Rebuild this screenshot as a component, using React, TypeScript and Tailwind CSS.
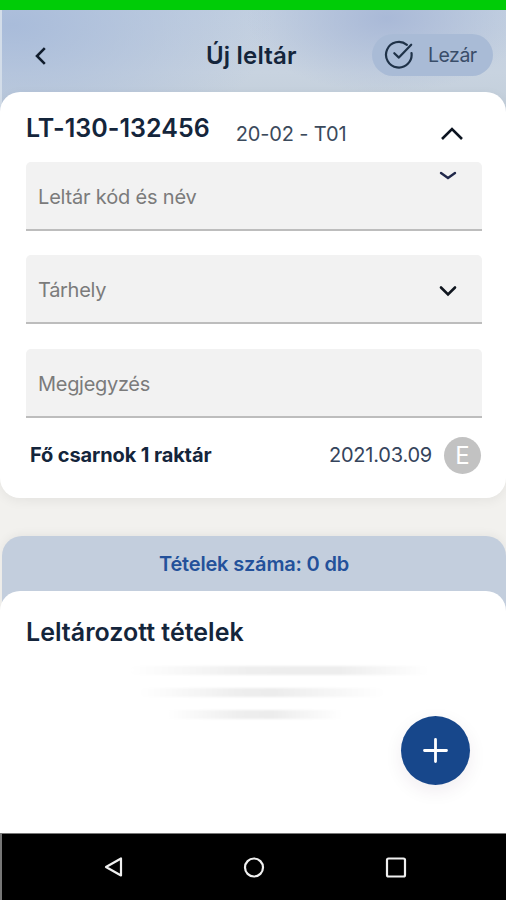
import type { ReactNode } from 'react'

type FieldProps = {
  label: string
  className?: string
  labelClass?: string
  children?: ReactNode
}

function Field({ label, className = '', labelClass = '', children }: FieldProps) {
  return (
    <div className={`flex h-[69px] justify-between rounded-t-[5px] border-b-2 border-[#bdbdbd] bg-[#f2f2f2] pl-[12px] pr-[24px] ${className}`}>
      <span className={`self-center whitespace-nowrap pt-[2px] text-[20px] leading-6 text-[#7b7b7b] ${labelClass}`}>{label}</span>
      {children}
    </div>
  )
}

function Header() {
  return (
    <header className="flex h-[104px] items-start border-l-2 border-[#d3dde9] bg-[radial-gradient(ellipse_140px_75px_at_385px_8px,#a9b9d7_0%,rgba(174,190,218,0)_100%),radial-gradient(ellipse_260px_130px_at_10px_15px,#a9bcda_0%,rgba(174,192,218,0)_100%),linear-gradient(180deg,#c3d0e1_0%,#c8d3e0_60%,#c2ced9_100%)] pl-[32px] pr-[13px] pt-[24px]">
      <button aria-label="Vissza" className="flex h-[42px] w-[14px] items-center pt-[2px]">
        <svg width="14" height="20" viewBox="0 0 14 20" fill="none" stroke="#101c2c" strokeWidth="2.6">
          <path d="M10.8 2.2 3 10l7.8 7.8" />
        </svg>
      </button>
      <h1 className="ml-[158px] mt-[5px] whitespace-nowrap text-[24px] font-semibold leading-[34px] tracking-[0.2px] text-[#14253b]">Új leltár</h1>
      <button className="ml-auto flex h-[42px] w-[121px] items-center rounded-full bg-[#a9bbd6] pl-[12px]">
        <svg width="30" height="30" viewBox="0 0 30 30" fill="none" stroke="#1f3248" strokeWidth="2.2" strokeLinecap="round" strokeLinejoin="round">
          <path d="M22.9 4.8A12.8 12.8 0 1 0 27.5 13" />
          <path d="m10.3 13.2 4.6 4.4L27.2 4.7" />
        </svg>
        <span className="ml-[14px] text-[19.5px] leading-6 tracking-[-0.5px] text-[#394d69]">Lezár</span>
      </button>
    </header>
  )
}

function DetailsCard() {
  return (
    <section className="-mt-[22px] flex h-[406px] flex-col rounded-[20px] bg-white pl-[26px] pr-[24px] shadow-[0_3px_12px_rgba(0,0,0,0.06)]">
      <div className="flex h-[70px] items-start">
        <h2 className="mt-[21px] whitespace-nowrap text-[25px] font-semibold leading-[30px] tracking-[0.05px] text-[#14253b]">LT-130-132456</h2>
        <span className="ml-[26px] mt-[30px] whitespace-nowrap text-[20px] leading-6 tracking-[-0.15px] text-[#3b4a5c]">20-02 - T01</span>
        <svg className="ml-auto mr-[18px] mt-[34px]" width="24" height="15" viewBox="0 0 24 15" fill="none" stroke="#0c1420" strokeWidth="2.6">
          <path d="M2 13 12 3l10 10" />
        </svg>
      </div>
      <Field label="Leltár kód és név" labelClass="tracking-[-0.18px]">
        <svg className="mt-[8px]" width="20" height="11" viewBox="0 0 20 11" fill="none" stroke="#20284a" strokeWidth="2.4" strokeLinecap="round">
          <path d="m3 3 7 5 7-5" />
        </svg>
      </Field>
      <Field label="Tárhely" className="mt-[24px]" labelClass="tracking-[-0.3px]">
        <svg className="mt-[29px]" width="20" height="14" viewBox="0 0 20 14" fill="none" stroke="#10161f" strokeWidth="2.6" strokeLinecap="round">
          <path d="m3 3.5 7 7 7-7" />
        </svg>
      </Field>
      <Field label="Megjegyzés" className="mt-[25px]" labelClass="tracking-[-0.3px]" />
      <div className="mt-[18px] flex h-[38px] items-center pl-[4px] pr-px">
        <strong className="whitespace-nowrap text-[20px] font-bold leading-6 tracking-[-0.12px] text-[#14253b]">Fő csarnok 1 raktár</strong>
        <span className="ml-auto whitespace-nowrap text-[20px] leading-6 tracking-[-0.22px] text-[#35445c]">2021.03.09</span>
        <span className="ml-[12px] flex size-[37px] items-center justify-center rounded-full bg-[#c2c2c2] pt-px text-[24px] text-white">E</span>
      </div>
    </section>
  )
}

function Items() {
  return (
    <section className="ml-[2px] mt-[38px] flex flex-1 flex-col rounded-t-[20px] bg-[#c3cedd] shadow-[0_-2px_10px_rgba(0,0,0,0.05)]">
      <p className="h-[55px] pt-[16px] text-center text-[20px] font-semibold leading-6 tracking-[-0.18px] text-[#23519a]">Tételek száma: 0 db</p>
      <div className="-ml-[2px] flex flex-1 flex-col rounded-t-[20px] bg-white">
        <h2 className="ml-[26px] mt-[24px] text-[25px] font-semibold leading-[34px] text-[#14253b]">Leltározott tételek</h2>
        <div className="mt-[17px] flex flex-col gap-[13px] pl-[130px]">
          <div className="h-[9px] w-[298px] bg-[linear-gradient(90deg,#ffffff_0%,#eeeeee_40%,#ededed_70%,#ffffff_100%)] blur-[1px]" />
          <div className="ml-[10px] h-[9px] w-[244px] bg-[linear-gradient(90deg,#ffffff_0%,#eeeeee_40%,#ececec_55%,#ffffff_100%)] blur-[1px]" />
          <div className="ml-[38px] h-[9px] w-[174px] bg-[linear-gradient(90deg,#ffffff_0%,#eeeeee_40%,#ececec_60%,#ffffff_100%)] blur-[1px]" />
        </div>
      </div>
    </section>
  )
}

function SystemBar() {
  return (
    <nav className="flex h-[67px] items-center border-l-2 border-t border-[#777777] bg-black pl-[101px] text-[#f0f0f0]">
      <svg width="22" height="24" viewBox="0 0 22 24" fill="none" stroke="currentColor" strokeWidth="2.2" strokeLinejoin="round">
        <path d="M18 3.5v17L3 12z" />
      </svg>
      <svg className="ml-[117px]" width="24" height="24" viewBox="0 0 24 24" fill="none" stroke="currentColor" strokeWidth="2.2">
        <circle cx="12" cy="12.5" r="9" />
      </svg>
      <svg className="ml-[118px]" width="24" height="24" viewBox="0 0 24 24" fill="none" stroke="currentColor" strokeWidth="2.2">
        <rect x="3" y="3.5" width="18" height="18" rx="1.5" />
      </svg>
    </nav>
  )
}

export default function App() {
  return (
    <main className="relative flex h-[900px] w-[506px] flex-col overflow-hidden bg-[#f2f1ee] font-['Inter','Liberation_Sans',sans-serif]">
      <div className="h-[10px] shrink-0 bg-[#00cc07]" />
      <Header />
      <DetailsCard />
      <Items />
      <SystemBar />
      <button aria-label="Új tétel" className="absolute left-[401px] top-[716px] flex size-[69px] items-center justify-center rounded-full bg-[#17478b] shadow-[0_6px_18px_rgba(60,30,60,0.08)]">
        <svg width="28" height="28" viewBox="0 0 28 28" stroke="#ffffff" strokeWidth="2.8" strokeLinecap="round">
          <path d="M13.5 2.5v22M2.5 13.5h22" />
        </svg>
      </button>
    </main>
  )
}
